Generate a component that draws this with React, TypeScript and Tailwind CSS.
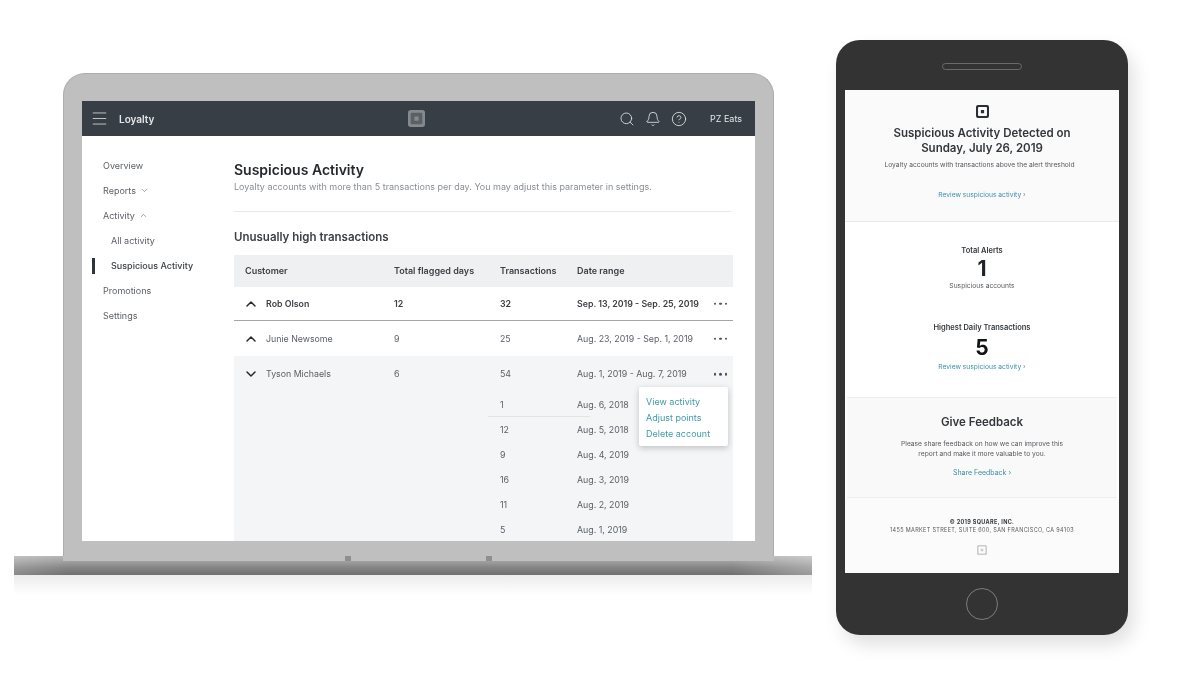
import React from "react";
import { Bell, ChevronDown, ChevronUp, CircleHelp, Menu, Search } from "lucide-react";

const subRows = [
  { count: "1", date: "Aug. 6, 2018" },
  { count: "12", date: "Aug. 5, 2018" },
  { count: "9", date: "Aug. 4, 2019" },
  { count: "16", date: "Aug. 3, 2019" },
  { count: "11", date: "Aug. 2, 2019" },
  { count: "5", date: "Aug. 1, 2019" },
];

const rowGrid = "grid grid-cols-[160px_106px_77px_1fr] items-center";

const SquareLogo = ({ className, hole }: { className: string; hole: string }) => (
  <svg viewBox="0 0 16 16" className={className}>
    <rect x="0" y="0" width="16" height="16" rx="2.5" fill="currentColor" />
    <rect x="2.5" y="2.5" width="11" height="11" rx="1" fill={hole} />
    <rect x="6" y="6" width="4" height="4" rx="0.5" fill="currentColor" />
  </svg>
);

const Dots = () => (
  <div className="flex gap-[3px] absolute right-[6px] top-1/2 -translate-y-1/2">
    <span className="w-[2.5px] h-[2.5px] rounded-full bg-[#4a4f55]" />
    <span className="w-[2.5px] h-[2.5px] rounded-full bg-[#4a4f55]" />
    <span className="w-[2.5px] h-[2.5px] rounded-full bg-[#4a4f55]" />
  </div>
);

const Sidebar = () => (
  <div className="w-[152px] shrink-0 pt-[17px] text-[9px] text-[#5c6167]">
    <div className="h-[25px] pl-[21px] flex items-center">Overview</div>
    <div className="h-[25px] pl-[21px] flex items-center gap-[4px]">
      Reports <ChevronDown size={9} strokeWidth={1.5} />
    </div>
    <div className="h-[25px] pl-[21px] flex items-center gap-[4px]">
      Activity <ChevronUp size={9} strokeWidth={1.5} />
    </div>
    <div className="h-[25px] pl-[29px] flex items-center">All activity</div>
    <div className="h-[25px] pl-[10px] flex items-center font-medium text-[#3c4146]">
      <span className="w-[3px] h-[16px] bg-[#2f343a] mr-[16px]" />
      Suspicious Activity
    </div>
    <div className="h-[25px] pl-[21px] flex items-center">Promotions</div>
    <div className="h-[25px] pl-[21px] flex items-center">Settings</div>
  </div>
);

const SuspiciousTable = () => (
  <div className="relative text-[8.8px] text-[#5c6167]">
    <div className={`${rowGrid} h-[32px] bg-[#eef0f2] text-[9px] font-semibold text-[#3c4146]`}>
      <div className="pl-[11px]">Customer</div>
      <div>Total flagged days</div>
      <div>Transactions</div>
      <div>Date range</div>
    </div>
    <div className={`${rowGrid} relative h-[34px] border-b-[1.5px] border-[#a3a6a9] font-semibold text-[#3c4146]`}>
      <div className="pl-[9px] flex items-center gap-[7px]">
        <ChevronUp size={16} strokeWidth={2.25} className="text-[#25282c]" />
        Rob Olson
      </div>
      <div>12</div>
      <div>32</div>
      <div>Sep. 13, 2019 - Sep. 25, 2019</div>
      <Dots />
    </div>
    <div className={`${rowGrid} relative h-[35px]`}>
      <div className="pl-[9px] flex items-center gap-[7px]">
        <ChevronUp size={16} strokeWidth={2.25} className="text-[#25282c]" />
        Junie Newsome
      </div>
      <div>9</div>
      <div>25</div>
      <div>Aug. 23, 2019 - Sep. 1, 2019</div>
      <Dots />
    </div>
    <div className="bg-[#f3f5f7]">
      <div className={`${rowGrid} relative h-[36px]`}>
        <div className="pl-[9px] flex items-center gap-[7px]">
          <ChevronDown size={16} strokeWidth={2.25} className="text-[#25282c]" />
          Tyson Michaels
        </div>
        <div>6</div>
        <div>54</div>
        <div>Aug. 1, 2019 - Aug. 7, 2019</div>
        <Dots />
      </div>
      {subRows.map((row) => (
        <div key={row.date} className={`${rowGrid} h-[25px]`}>
          <div />
          <div />
          <div>{row.count}</div>
          <div>{row.date}</div>
        </div>
      ))}
    </div>
    <div className="absolute left-[254px] top-[161px] w-[102px] h-px bg-[#e1e4e7]" />
    <div className="absolute left-[405px] top-[132px] w-[89px] h-[59px] bg-white rounded-[2px] shadow-[0_2px_6px_rgba(0,0,0,0.22)] pl-[7px] pt-[7px] text-[9px] text-[#3f9aa8] leading-[16px]">
      <div>View activity</div>
      <div>Adjust points</div>
      <div>Delete account</div>
    </div>
  </div>
);

const Laptop = () => (
  <div className="w-[798px] shrink-0 mt-[73px]">
    <div className="ml-[49px] mr-[38px] h-[483px] rounded-t-[22px] bg-[#bfbfbf] border-t border-x border-[#adadad] pt-[27px] px-[18px]">
      <div className="h-[440px] bg-white flex flex-col">
        <div className="h-[35px] shrink-0 bg-[#373e45] flex items-center text-[#e4e6e8] pl-[8px] pr-[9px]">
          <div className="flex-1 flex items-center gap-[10px]">
            <Menu size={19} strokeWidth={1} />
            <span className="text-[10px] font-semibold pt-[1px]">Loyalty</span>
          </div>
          <SquareLogo className="w-[17px] h-[17px] text-[#858a8f]" hole="#5a6066" />
          <div className="flex-1 flex items-center justify-end gap-[10px] pr-[4px]">
            <Search size={16} strokeWidth={1.25} />
            <Bell size={16} strokeWidth={1.25} />
            <CircleHelp size={16} strokeWidth={1.25} />
            <span className="text-[9px] ml-[13px] pt-[1px]">PZ Eats</span>
          </div>
        </div>
        <div className="h-[405px] flex overflow-hidden">
          <Sidebar />
          <div className="w-[499px] pt-[24px]">
            <h1 className="text-[14px] leading-[20px] font-semibold text-[#25282c]">Suspicious Activity</h1>
            <p className="text-[9px] leading-[14px] text-[#8a8f94]">
              Loyalty accounts with more than 5 transactions per day. You may adjust this parameter in settings.
            </p>
            <div className="h-px bg-[#e6e8ea] mt-[17px] mr-[2px]" />
            <h2 className="text-[11.5px] leading-[16px] font-semibold text-[#3c4146] mt-[17px]">
              Unusually high transactions
            </h2>
            <div className="mt-[10px]">
              <SuspiciousTable />
            </div>
          </div>
        </div>
      </div>
    </div>
    <div className="h-[19px] bg-[linear-gradient(to_right,rgba(255,255,255,0.18),transparent_7%,transparent_90%,rgba(255,255,255,0.3)),linear-gradient(to_bottom,#b5b5b5_0%,#a0a0a0_28%,#858585_60%,#6f6f6f_100%)]">
      <div className="ml-[49px] mr-[38px] h-[5px] bg-[#bfbfbf] flex justify-between px-[282px]">
        <span className="w-[6px] h-[5px] bg-[#8f8f8f]" />
        <span className="w-[6px] h-[5px] bg-[#8f8f8f]" />
      </div>
    </div>
    <div className="h-[20px] bg-[linear-gradient(to_bottom,#ececec,#ffffff)]" />
  </div>
);

const Phone = () => (
  <div className="w-[292px] h-[595px] shrink-0 mt-[40px] ml-[24px] rounded-[24px] bg-[#333333] shadow-[6px_10px_18px_rgba(0,0,0,0.12)] flex flex-col items-center">
    <div className="w-[80px] h-[7px] mt-[23px] rounded-full border border-[#6b6b6b]" />
    <div className="w-[274px] h-[483px] mt-[20px] bg-white flex flex-col text-center text-[6.7px] text-[#55595e]">
      <div className="h-[132px] shrink-0 bg-[#fafafa] border-b border-[#e9e9e9] pt-[15px] flex flex-col items-center">
        <SquareLogo className="w-[13px] h-[13px] text-[#2b2e32]" hole="#fafafa" />
        <h3 className="mt-[8px] text-[11.5px] leading-[15px] font-semibold text-[#33373b]">
          Suspicious Activity Detected on
          <br />
          Sunday, July 26, 2019
        </h3>
        <p className="mt-[5px] mr-[5px] leading-[9px]">Loyalty accounts with transactions above the alert threshold</p>
        <a className="mt-[21px] leading-[9px] text-[#3b8fa8]">Review suspicious activity ›</a>
      </div>
      <div className="h-[175px] shrink-0 pt-[24px] flex flex-col items-center">
        <div className="text-[7.5px] leading-[10px] font-semibold text-[#33373b]">Total Alerts</div>
        <div className="mt-[1px] text-[21px] leading-[24px] font-bold text-[#1f2226]">1</div>
        <div className="leading-[9px] mt-[1px]">Suspicious accounts</div>
        <div className="mt-[32px] text-[7.5px] leading-[10px] font-semibold text-[#33373b]">Highest Daily Transactions</div>
        <div className="mt-[3px] text-[21px] leading-[24px] font-bold text-[#111315]">5</div>
        <a className="mt-[3px] leading-[9px] text-[#3b8fa8]">Review suspicious activity ›</a>
      </div>
      <div className="h-[101px] shrink-0 mx-[2px] bg-[#f9f9f9] border-t border-b border-[#eeeeee] pt-[17px]">
        <h3 className="text-[11.5px] leading-[15px] font-semibold text-[#33373b]">Give Feedback</h3>
        <p className="mt-[9px] leading-[10px]">
          Please share feedback on how we can improve this
          <br />
          report and make it more valuable to you.
        </p>
        <a className="block mt-[9px] text-[7px] leading-[9px] text-[#3b8fa8]">Share Feedback ›</a>
      </div>
      <div className="flex-1 bg-[#fbfbfb] pt-[20px] flex flex-col items-center tracking-[0.06em] text-[5.5px] leading-[8px]">
        <div className="font-bold text-[#33373b]">© 2019 SQUARE, INC.</div>
        <div>1455 MARKET STREET, SUITE 600, SAN FRANCISCO, CA 94103</div>
        <SquareLogo className="w-[10px] h-[10px] mt-[11px] text-[#c9cbcd]" hole="#fbfbfb" />
      </div>
    </div>
    <div className="w-[32px] h-[32px] mt-[15px] rounded-full border border-[#7d7d7d]" />
  </div>
);

export default function App() {
  return (
    <div className="w-[1200px] h-[675px] bg-white overflow-hidden pl-[14px] flex items-start font-['Inter',sans-serif] blur-[0.4px]">
      <Laptop />
      <Phone />
    </div>
  );
}
